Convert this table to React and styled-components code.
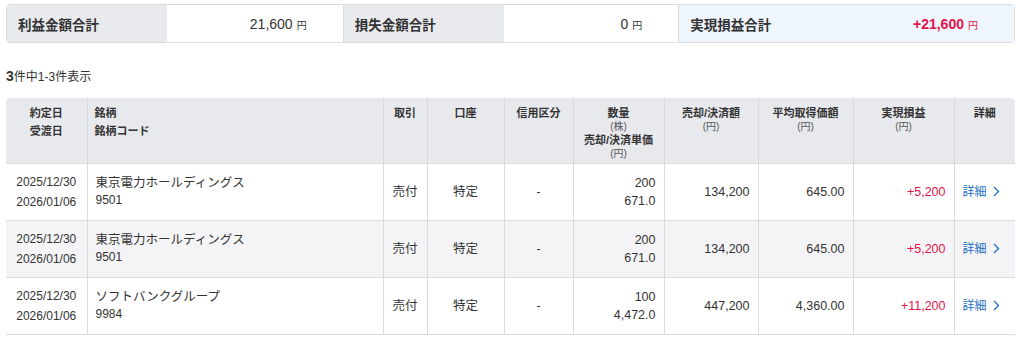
import React from "react";
import styled, { createGlobalStyle } from "styled-components";

const Global = createGlobalStyle`
  html, body { margin: 0; padding: 0; background: #fff; }
  body {
    font-family: "Liberation Sans", "Noto Sans CJK JP", sans-serif;
    color: #333;
  }
`;

const Page = styled.div`
  padding: 4px 9px 0 6px;
  width: 1009px;
`;

const Summary = styled.div`
  display: grid;
  grid-template-columns: 1fr 1fr 1fr;
  height: 37px;
  border: 1px solid #dcdcdc;
  border-radius: 4px;
  overflow: hidden;
`;

const Group = styled.div`
  display: grid;
  grid-template-columns: 160px 1fr;
  background: ${(p) => (p.$highlight ? "#eef5fd" : "#fff")};
  & + & { border-left: 1px solid #dcdcdc; }
`;

const SumLabel = styled.div`
  display: flex;
  align-items: center;
  padding-left: 11px;
  font-size: 13.5px;
  font-weight: bold;
  color: #333;
  background: ${(p) => (p.$highlight ? "transparent" : "#e9eaee")};
`;

const SumValue = styled.div`
  display: flex;
  align-items: center;
  justify-content: flex-end;
  padding-right: 36px;
  font-size: 14px;
  font-weight: ${(p) => (p.$plus ? "bold" : "normal")};
  color: ${(p) => (p.$plus ? "#e5124a" : "#333")};
`;

const Yen = styled.span`
  font-size: 10px;
  font-weight: normal;
  margin-left: 4px;
  margin-top: 2px;
`;

const Count = styled.div`
  margin-top: 23px;
  font-size: 12px;
  color: #333;
  height: 20px;
  line-height: 20px;
  & b { font-size: 14px; font-weight: bold; }
`;

const TableWrap = styled.div`
  margin-top: 12px;
  border-radius: 4px 4px 0 0;
  overflow: hidden;
`;

const Table = styled.table`
  width: 1009px;
  border-collapse: collapse;
  table-layout: fixed;
`;

const Th = styled.th`
  background: #e8e9ed;
  height: 65px;
  padding: 6px 7px 0;
  box-sizing: border-box;
  vertical-align: top;
  text-align: ${(p) => p.$align || "center"};
  font-size: 11px;
  font-weight: bold;
  line-height: 18px;
  color: #333;
  border-left: 1px solid #d8d9dd;
  &:first-child { border-left: none; }
`;

const Sub = styled.div`
  font-size: 10px;
  font-weight: normal;
  color: #555;
  line-height: 13px;
`;

const Stack = styled.div`
  line-height: 14px;
  padding-top: 2px;
`;

const Tr = styled.tr`
  background: ${(p) => (p.$alt ? "#f4f4f6" : "#fff")};
  border-top: 1px solid #dcdcdc;
  border-bottom: 1px solid #dcdcdc;
`;

const Td = styled.td`
  height: 56px;
  padding: 0 8px;
  vertical-align: middle;
  text-align: ${(p) => p.$align || "center"};
  font-size: ${(p) => p.$size || "12px"};
  line-height: ${(p) => p.$lh || "20px"};
  color: ${(p) => (p.$plus ? "#e5124a" : "#333")};
  border-left: 1px solid #dcdcdc;
  &:first-child { border-left: none; }
`;

const Name = styled.div`
  font-size: 12.5px;
  line-height: 17px;
`;

const Code = styled.div`
  font-size: 12px;
  line-height: 17px;
`;

const Detail = styled.a`
  display: inline-flex;
  align-items: center;
  gap: 6px;
  color: #1b6ec2;
  font-size: 12px;
  text-decoration: none;
  cursor: pointer;
`;

const Chevron = () => (
  <svg width="7" height="11" viewBox="0 0 7 11" fill="none">
    <path d="M1 1l4.5 4.5L1 10" stroke="#1b6ec2" strokeWidth="1.3" />
  </svg>
);

const rows = [
  { name: "東京電力ホールディングス", code: "9501", qty: "200", price: "671.0", amt: "134,200", avg: "645.00", pl: "+5,200" },
  { name: "東京電力ホールディングス", code: "9501", qty: "200", price: "671.0", amt: "134,200", avg: "645.00", pl: "+5,200" },
  { name: "ソフトバンクグループ", code: "9984", qty: "100", price: "4,472.0", amt: "447,200", avg: "4,360.00", pl: "+11,200" },
];

export default function App() {
  return (
    <Page>
      <Global />
      <Summary>
        <Group>
          <SumLabel>利益金額合計</SumLabel>
          <SumValue>21,600<Yen>円</Yen></SumValue>
        </Group>
        <Group>
          <SumLabel>損失金額合計</SumLabel>
          <SumValue>0<Yen>円</Yen></SumValue>
        </Group>
        <Group $highlight>
          <SumLabel $highlight>実現損益合計</SumLabel>
          <SumValue $plus>+21,600<Yen>円</Yen></SumValue>
        </Group>
      </Summary>

      <Count><b>3</b>件中1-3件表示</Count>

      <TableWrap>
        <Table>
          <colgroup>
            <col style={{ width: 81 }} />
            <col style={{ width: 296 }} />
            <col style={{ width: 44 }} />
            <col style={{ width: 77 }} />
            <col style={{ width: 69 }} />
            <col style={{ width: 91 }} />
            <col style={{ width: 94 }} />
            <col style={{ width: 95 }} />
            <col style={{ width: 101 }} />
            <col style={{ width: 61 }} />
          </colgroup>
          <thead>
            <tr>
              <Th>約定日<br />受渡日</Th>
              <Th $align="left">銘柄<br />銘柄コード</Th>
              <Th>取引</Th>
              <Th>口座</Th>
              <Th>信用区分</Th>
              <Th>
                <Stack>
                  数量
                  <Sub>(株)</Sub>
                  売却/決済単価
                  <Sub>(円)</Sub>
                </Stack>
              </Th>
              <Th><Stack>売却/決済額<Sub>(円)</Sub></Stack></Th>
              <Th><Stack>平均取得価額<Sub>(円)</Sub></Stack></Th>
              <Th><Stack>実現損益<Sub>(円)</Sub></Stack></Th>
              <Th>詳細</Th>
            </tr>
          </thead>
          <tbody>
            {rows.map((r, i) => (
              <Tr key={i} $alt={i === 1}>
                <Td>2025/12/30<br />2026/01/06</Td>
                <Td $align="left">
                  <Name>{r.name}</Name>
                  <Code>{r.code}</Code>
                </Td>
                <Td $size="12.5px">売付</Td>
                <Td $size="12.5px">特定</Td>
                <Td>-</Td>
                <Td $align="right" $size="12.5px" $lh="18px">{r.qty}<br />{r.price}</Td>
                <Td $align="right" $size="12.5px">{r.amt}</Td>
                <Td $align="right" $size="12.5px">{r.avg}</Td>
                <Td $align="right" $size="12.5px" $plus>{r.pl}</Td>
                <Td $align="left">
                  <Detail>詳細<Chevron /></Detail>
                </Td>
              </Tr>
            ))}
          </tbody>
        </Table>
      </TableWrap>
    </Page>
  );
}
